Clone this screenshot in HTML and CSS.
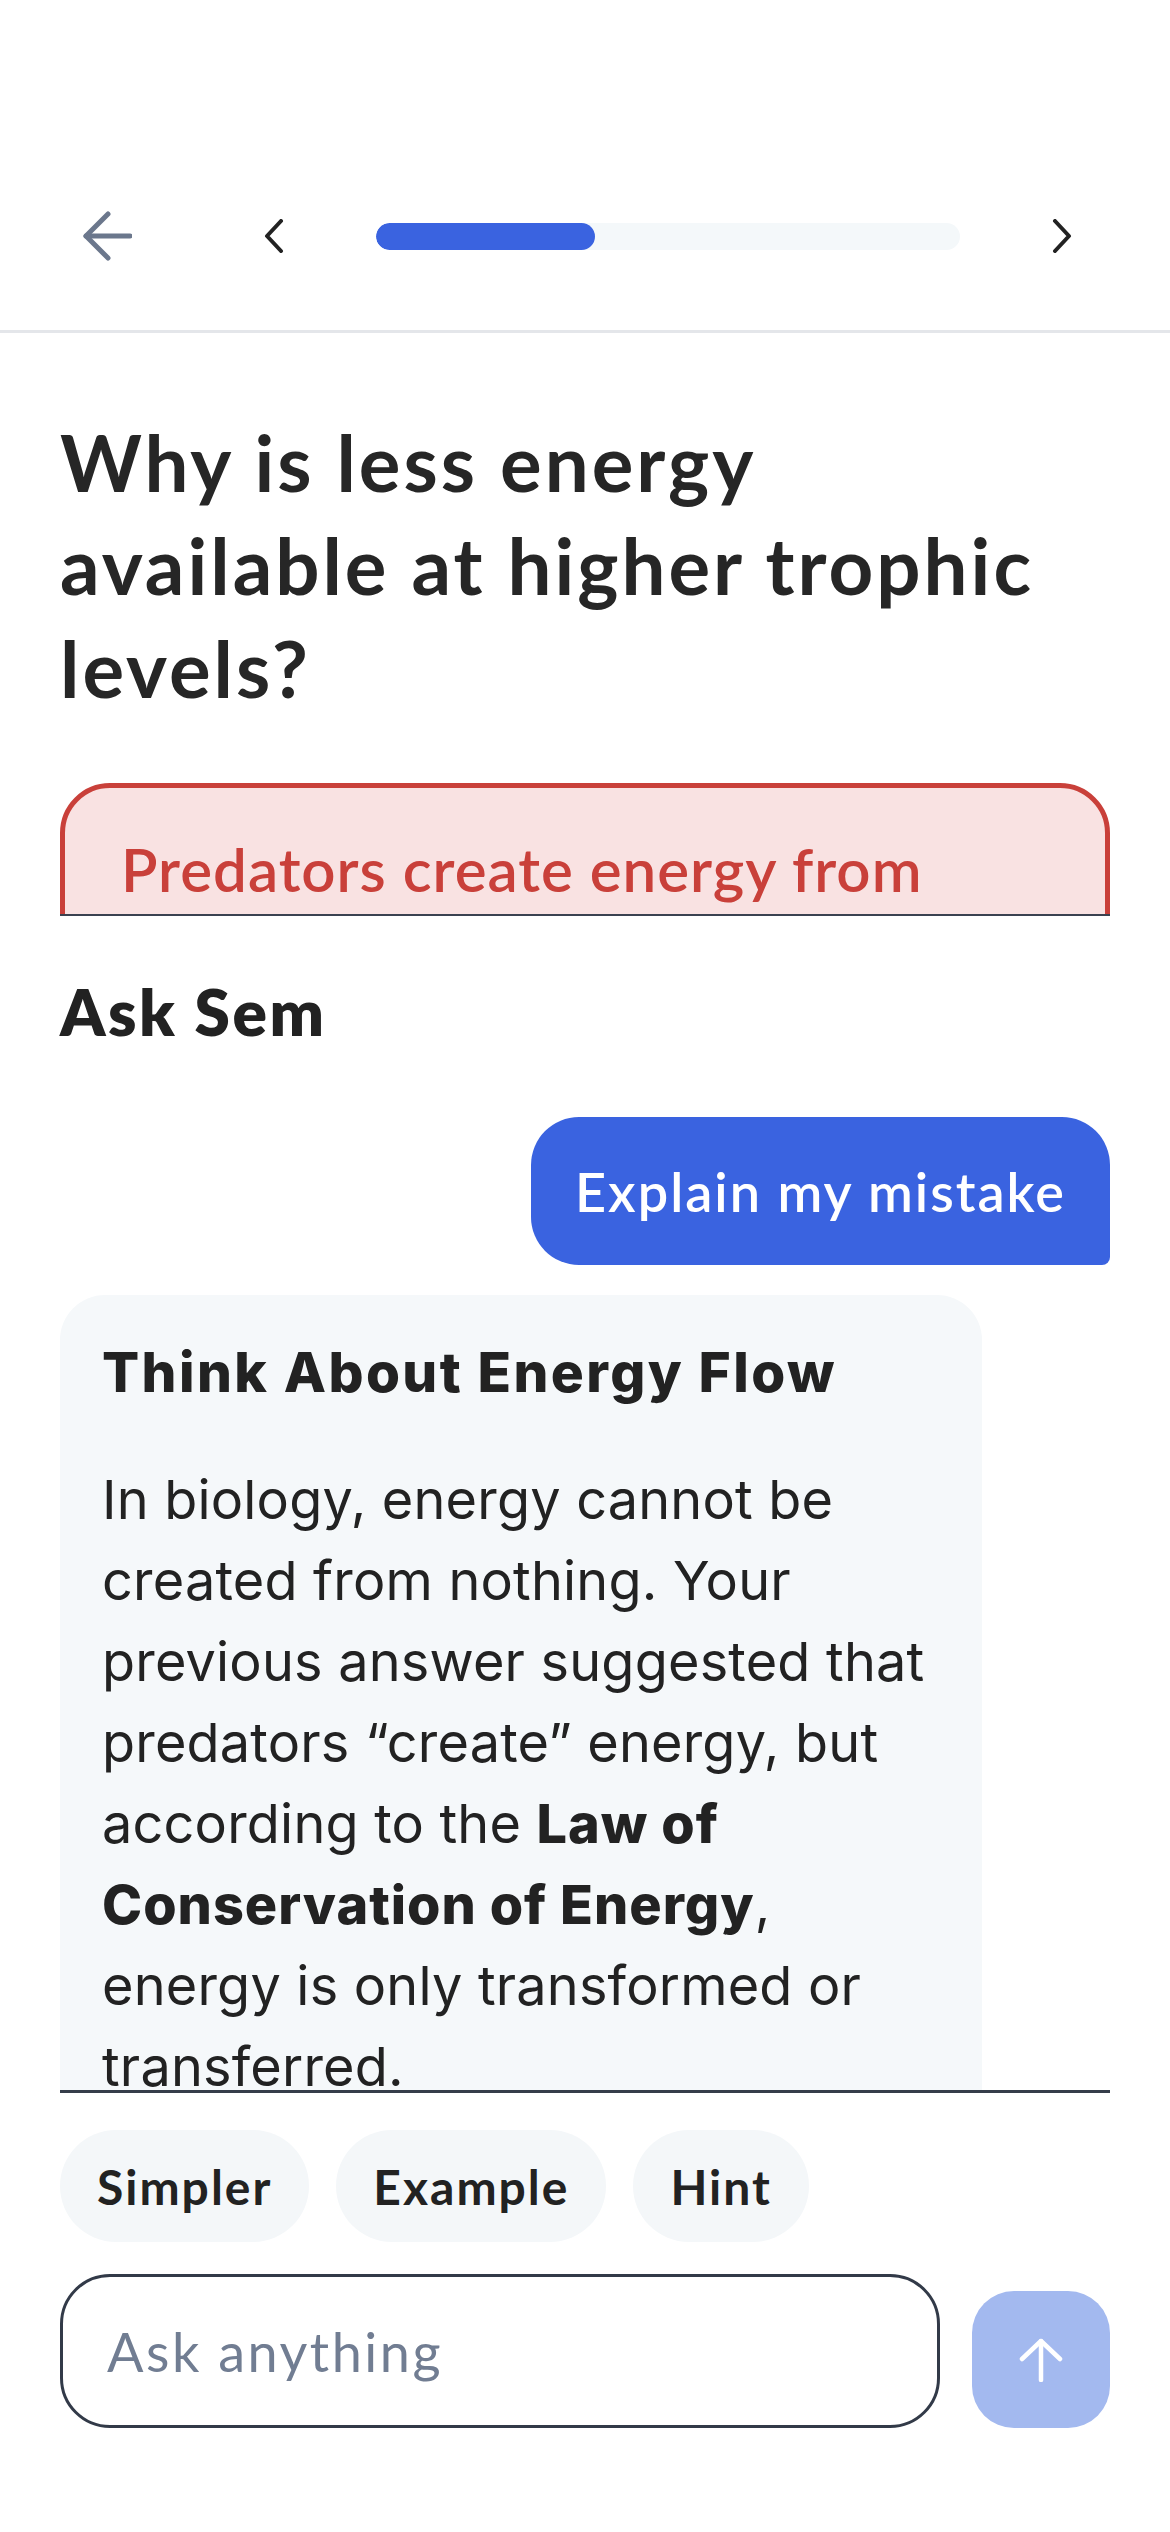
FILE: index.html
```html
<!DOCTYPE html>
<html lang="en">
<head>
    <meta charset="UTF-8">
    <meta name="viewport" content="width=device-width, initial-scale=1.0">
    <title>Ask Sem</title>
    <link rel="stylesheet" href="styles.css">
</head>
<body>
    <header class="topbar">
        <button class="icon-btn back-btn" aria-label="Back">
            <svg width="50" height="50" viewBox="0 0 50 50" fill="none" stroke="#6b778c" stroke-width="5" stroke-linecap="round" stroke-linejoin="round">
                <path d="M48 25H4"/>
                <path d="M26 3L4 25L26 47"/>
            </svg>
        </button>
        <button class="icon-btn chev-btn" aria-label="Previous">
            <svg width="24" height="34" viewBox="0 0 24 34" fill="none" stroke="#222" stroke-width="4" stroke-linecap="round" stroke-linejoin="round">
                <path d="M19 2L5 17L19 32"/>
            </svg>
        </button>
        <div class="progress"><div class="progress-fill" style="width: 37.5%"></div></div>
        <button class="icon-btn chev-btn" aria-label="Next">
            <svg width="24" height="34" viewBox="0 0 24 34" fill="none" stroke="#222" stroke-width="4" stroke-linecap="round" stroke-linejoin="round">
                <path d="M5 2L19 17L5 32"/>
            </svg>
        </button>
    </header>

    <!-- 問題と回答（上部スクロール領域） -->
    <section class="question-area">
        <h1 class="question">Why is less energy available at higher trophic levels?</h1>
        <div class="answer wrong">Predators create energy from nothing when they hunt their prey.</div>
    </section>

    <section class="sheet">
        <h2 class="sheet-title">Ask Sem</h2>

        <div class="chat">
            <div class="msg msg-user">Explain my mistake</div>
            <div class="msg msg-bot">
                <h3 class="bot-title">Think About Energy Flow</h3>
                <p class="bot-text">In biology, energy cannot be created from nothing. Your previous answer suggested that predators “create” energy, but according to the <strong>Law of Conservation of Energy</strong>, energy is only transformed or transferred.</p>
                <p class="bot-text">At each trophic level, most energy is lost as heat.</p>
            </div>
        </div>

        <div class="chips">
            <button class="chip">Simpler</button>
            <button class="chip">Example</button>
            <button class="chip">Hint</button>
        </div>

        <div class="composer">
            <input class="ask-input" type="text" placeholder="Ask anything">
            <button class="send-btn" aria-label="Send">
                <svg width="44" height="44" viewBox="0 0 44 44" fill="none" stroke="#fff" stroke-width="4.5" stroke-linecap="round" stroke-linejoin="round">
                    <path d="M22 42V3"/>
                    <path d="M3 21L22 3L41 21"/>
                </svg>
            </button>
        </div>
    </section>
</body>
</html>
```

FILE: styles.css
```css
* {
    box-sizing: border-box;
}
body {
    margin: 0;
    background: #fff;
    color: #262626;
    font-family: "Lato", "Noto Sans", sans-serif;
}
button {
    font-family: inherit;
    border: none;
    background: none;
    padding: 0;
    cursor: pointer;
}

/* ヘッダー */
.topbar {
    height: 333px;
    border-bottom: 3px solid #e4e6ea;
    display: flex;
    align-items: center;
    gap: 82px;
    padding: 206px 88px 64px 82px;
}
.icon-btn {
    display: flex;
    align-items: center;
    justify-content: center;
}
.back-btn {
    width: 50px;
    height: 50px;
    margin-right: 40px;
}
.chev-btn {
    width: 40px;
    height: 40px;
}
.progress {
    flex: 1;
    height: 27px;
    border-radius: 14px;
    background: #f4f8fa;
    overflow: hidden;
}
.progress-fill {
    height: 100%;
    background: #3a63e0;
    border-radius: 14px;
}

/* 問題 */
.question-area {
    height: 581px;
    overflow: hidden;
    padding: 78px 60px 0;
}
.question {
    max-width: 1030px;
    margin: 0 0 63px;
    font-size: 78px;
    line-height: 103px;
    font-weight: 700;
    letter-spacing: 3px;
    color: #262626;
}
.answer {
    border-radius: 50px;
    padding: 39px 56px;
    font-size: 60px;
    line-height: 84px;
    font-weight: 600;
    letter-spacing: 1px;
}
.answer.wrong {
    border: 5px solid #c9403a;
    background: #f9e2e2;
    color: #c9403a;
}

/* Ask Sem */
.sheet {
    margin: 0 60px;
    border-top: 2px solid #3b4250;
}
.sheet-title {
    margin: 60px 0 0;
    font-size: 64px;
    line-height: 72px;
    font-weight: 800;
    letter-spacing: 2.5px;
    color: #222;
}
.chat {
    height: 1045px;
    overflow: hidden;
    padding-top: 69px;
    border-bottom: 3px solid #353d4a;
    display: flex;
    flex-direction: column;
    gap: 30px;
}
.msg-user {
    align-self: flex-end;
    height: 148px;
    display: flex;
    align-items: center;
    padding: 0 44px;
    background: #3a63e0;
    color: #fff;
    font-size: 54px;
    font-weight: 600;
    letter-spacing: 2px;
    border-radius: 48px 48px 8px 48px;
    flex-shrink: 0;
}
.msg-bot {
    width: 922px;
    background: #f5f8fa;
    border-radius: 45px;
    padding: 44px 40px 60px 42px;
    font-family: "Inter", "Liberation Sans", sans-serif;
    color: #222;
    flex-shrink: 0;
}
.bot-title {
    margin: 0 0 54px;
    font-size: 55px;
    line-height: 66px;
    font-weight: 800;
    letter-spacing: 2.4px;
}
.bot-text {
    margin: 0;
    font-size: 54px;
    line-height: 81px;
    letter-spacing: 0.2px;
}
.bot-text strong {
    font-weight: 800;
    letter-spacing: 1px;
}

/* チップ */
.chips {
    display: flex;
    gap: 27px;
    margin-top: 37px;
}
.chip {
    height: 112px;
    padding: 0 37px;
    border-radius: 56px;
    background: #f4f7f9;
    color: #222;
    font-size: 48px;
    font-weight: 700;
    letter-spacing: 2px;
}

/* 入力欄 */
.composer {
    display: flex;
    align-items: flex-end;
    gap: 32px;
    margin-top: 32px;
}
.ask-input {
    flex: 1;
    height: 154px;
    border: 3px solid #323a48;
    border-radius: 50px;
    padding: 0 44px;
    font-family: "Lato", "Noto Sans", sans-serif;
    font-size: 54px;
    letter-spacing: 2.5px;
    color: #222;
    outline: none;
}
.ask-input::placeholder {
    color: #717d92;
}
.send-btn {
    width: 138px;
    height: 137px;
    border-radius: 42px;
    background: #a3b9ef;
    display: flex;
    align-items: center;
    justify-content: center;
}
```
